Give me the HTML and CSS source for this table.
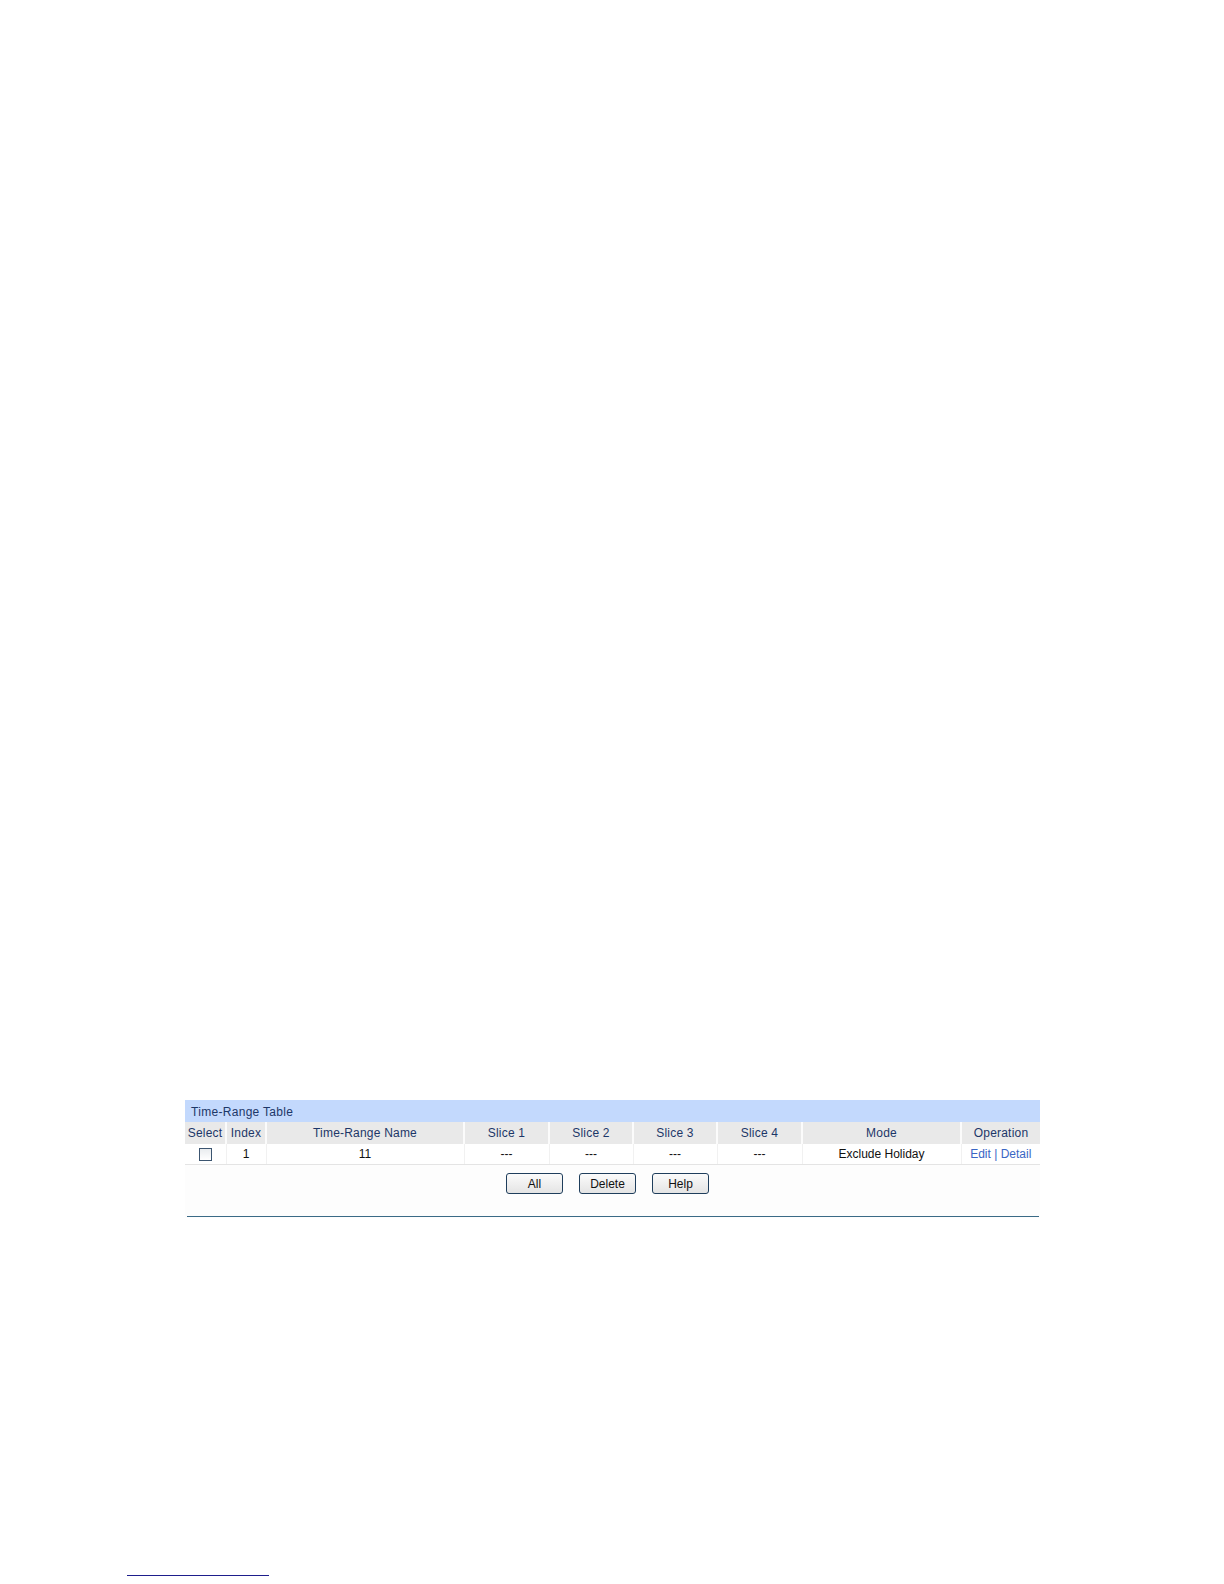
FILE: index.html
```html
<!DOCTYPE html>
<html>
<head>
<meta charset="utf-8">
<link rel="stylesheet" href="styles.css">
</head>
<body>
<div class="page">
  <div class="panel">
    <div class="title">Time-Range Table</div>
    <table class="grid">
      <colgroup>
        <col class="c-sel"><col class="c-idx"><col class="c-name"><col class="c-s"><col class="c-s2"><col class="c-s2"><col class="c-s"><col class="c-mode"><col class="c-op">
      </colgroup>
      <thead>
        <tr>
          <th>Select</th><th>Index</th><th>Time-Range Name</th><th>Slice 1</th><th>Slice 2</th><th>Slice 3</th><th>Slice 4</th><th>Mode</th><th>Operation</th>
        </tr>
      </thead>
      <tbody>
        <tr>
          <td><span class="chk"></span></td><td>1</td><td>11</td><td>---</td><td>---</td><td>---</td><td>---</td><td>Exclude Holiday</td><td><a class="lnk">Edit</a> <span class="bar">|</span> <a class="lnk">Detail</a></td>
        </tr>
      </tbody>
    </table>
    <div class="buttons">
      <button class="btn">All</button>
      <button class="btn">Delete</button>
      <button class="btn">Help</button>
    </div>
    <div class="rule"></div>
  </div>
  <div class="footer-line"></div>
</div>
</body>
</html>
```

FILE: styles.css
```css
html, body {
  margin: 0;
  padding: 0;
  background: #ffffff;
}
.page {
  width: 1224px;
  height: 1584px;
  padding-top: 1100px;
  box-sizing: border-box;
  font-family: "Liberation Sans", Arial, sans-serif;
  font-size: 12px;
}
.panel {
  margin-left: 185px;
  width: 855px;
  background: #fdfdfd;
}
.title {
  height: 22px;
  line-height: 24px;
  background: #c3d9fd;
  color: #1d3768;
  padding-left: 6px;
  letter-spacing: 0.3px;
}
.grid {
  width: 855px;
  border-collapse: collapse;
  table-layout: fixed;
}
.c-sel { width: 41px; }
.c-idx { width: 40px; }
.c-name { width: 198px; }
.c-s { width: 85px; }
.c-s2 { width: 84px; }
.c-mode { width: 159px; }
.c-op { width: 79px; }
.grid th {
  height: 22px;
  padding: 0;
  background: #e9e9e9;
  color: #1d3768;
  font-weight: normal;
  text-align: center;
  border-left: 2px solid #fbfbfb;
  white-space: nowrap;
  letter-spacing: 0.2px;
}
.grid th:first-child { border-left: none; }
.grid td {
  height: 20px;
  padding: 1px 0 0 0;
  box-sizing: border-box;
  text-align: center;
  color: #111;
  background: #ffffff;
  border-left: 1px solid #f1f1f1;
  border-bottom: 1px solid #e4e4e4;
  white-space: nowrap;
}
.grid td:first-child { border-left: none; }
.chk {
  display: inline-block;
  width: 11px;
  height: 11px;
  border: 1px solid #3c5570;
  background: linear-gradient(#e9ecef, #ffffff);
  vertical-align: middle;
  margin-left: 1px;
}
.lnk { color: #3a66c4; }
.bar { color: #3a66c4; }
.buttons {
  display: flex;
  justify-content: flex-start;
  gap: 16px;
  padding-left: 321px;
  padding-top: 8px;
  height: 21px;
}
.btn {
  width: 57px;
  height: 21px;
  padding: 1px 0 0 0;
  border: 1px solid #1f3e5c;
  border-radius: 3px;
  background: linear-gradient(#fbfbfb, #e4e4e4);
  font-family: "Liberation Sans", Arial, sans-serif;
  font-size: 12px;
  color: #111;
}
.rule {
  margin-top: 22px;
  margin-left: 2px;
  height: 1px;
  border-top: 1px solid #3a6a86;
  width: 852px;
}
.footer-line {
  margin-top: 357px;
  margin-left: 127px;
  width: 142px;
  height: 1px;
  border-top: 1px solid #1e1e8c;
}
```
